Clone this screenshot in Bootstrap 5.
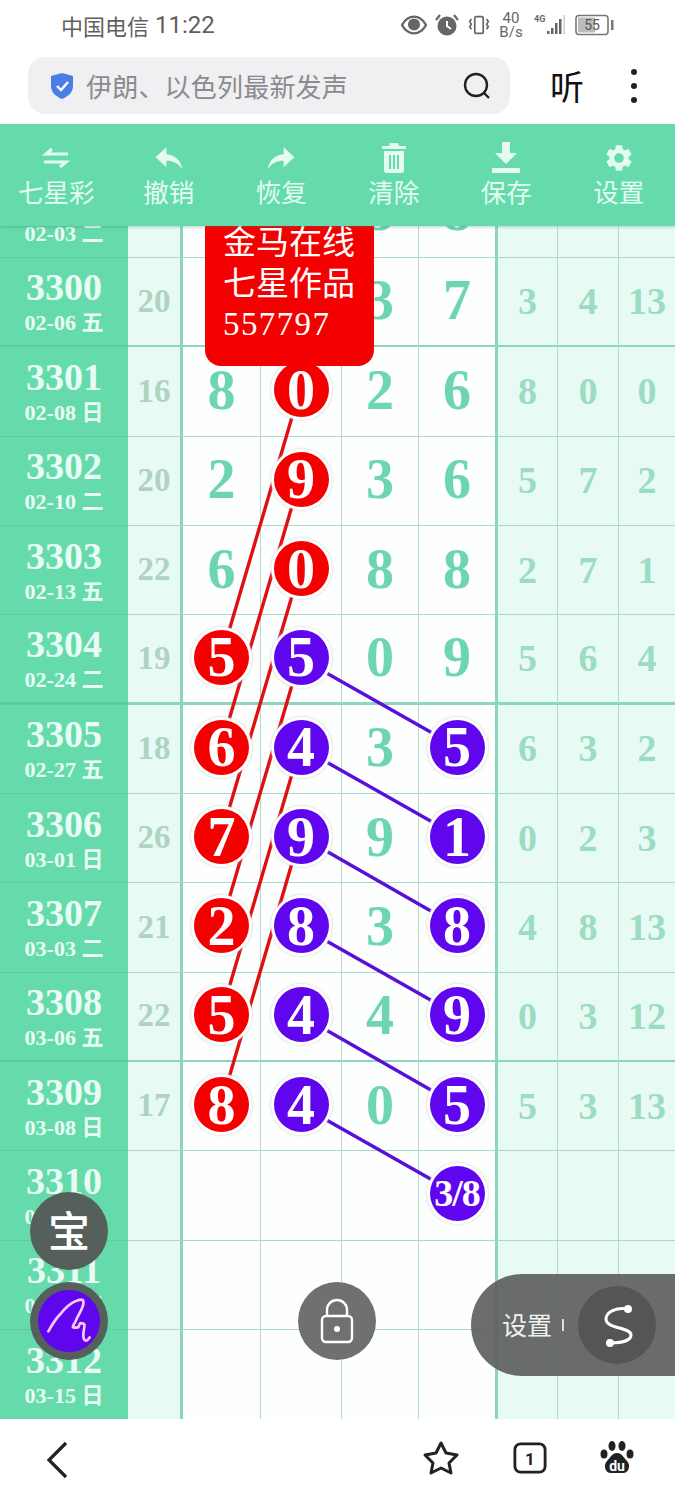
<!DOCTYPE html>
<html lang="zh">
<head>
<meta charset="utf-8">
<title>七星彩</title>
<link href="https://cdn.jsdelivr.net/npm/bootstrap@5.3.0/dist/css/bootstrap.min.css" rel="stylesheet">
<style>
    html, body { height: 1500px; overflow: hidden; background: #fff; }
    body { font-family: "Noto Sans CJK SC", "Noto Sans", sans-serif; position: relative; }
    .status-bar { height: 50px; padding: 0 60px 0 61px; color: #5f5f5f; font-size: 22px; }
    .status-time { font-family: Roboto, sans-serif; font-size: 24px; margin-left: 6px; }
    .status-icons { gap: 8.5px; }
    .speed { font-family: Roboto, sans-serif; font-size: 15px; line-height: 14px; color: #666; width: 26px; }
    .addr-row { height: 74px; padding: 7px 0 10px 28px; }
    .addr-box { width: 482px; height: 57px; background: #f0f0f2; border-radius: 17px; padding: 0 18px 0 22px; }
    .addr-text { color: #8b8b8f; font-size: 26px; letter-spacing: .2px; margin-left: 12px; line-height: 1; }
    .listen { width: 114px; font-size: 34px; color: #111; text-align: center; line-height: 1; }
    .dots { width: 6px; gap: 8px; margin-left: 7px; }
    .dots i { display: block; width: 6px; height: 6px; border-radius: 50%; background: #222; }
    .tool-bar { height: 102px; background: #65dbac; color: #e4fbf1; position: relative; z-index: 5; box-shadow: 0 1px 3px rgba(60,120,100,.35); padding-top: 18px; }
    .tool-bar svg { display: block; margin: 0 auto; height: 32px; }
    .tool-label { font-size: 25.5px; line-height: 36px; margin-top: -1px; }
    .chart-wrap { height: 1193px; position: relative; overflow: hidden; }
    .chart { margin-top: -57.33px; position: relative; }
    .chart-row { display: grid; grid-template-columns: 128px 55px 78px 81px 77px 79px 60px 61px 56px; height: 89.33px; font-family: "Liberation Serif", "Noto Sans CJK SC", serif; font-weight: 700; }
    .chart-row > div { display: flex; align-items: center; justify-content: center; border-bottom: 1.5px solid #abd9c9; border-right: 1.5px solid #b4dace; overflow: visible; }
    .chart-row.heavy > div { border-bottom: 3px solid #8fd5bd; }
    .chart-row > .side { flex-direction: column; background: #65dbac; color: #e9fcf4; border-right: 0; border-bottom-color: #5ccb9f; padding: 3px 0 0; }
    .chart-row.heavy > .side { border-bottom-color: #5ccb9f; }
    .chart-row:last-child > div { border-bottom: 0; }
    .side b { font-size: 38px; line-height: 40px; }
    .side span { font-size: 22px; line-height: 32px; }
    .chart-row > .sum { background: #e7faf5; color: #aed4c1; font-size: 33px; border-right: 3px solid #8fd5bd; }
    .chart-row > .num { background: #fcfffe; color: #6dd6b0; font-size: 56px; padding-bottom: 3px; }
    .chart-row > .num.last { border-right: 3px solid #8fd5bd; }
    .chart-row > .ext { background: #e7fbf4; color: #9bdcc3; font-size: 38px; }
    .chart-row > .ext:last-child { border-right: 0; }
    .ball { width: 55px; height: 55px; flex: none; display: flex; align-items: center; justify-content: center; border-radius: 50%; color: #fff; position: relative; z-index: 2; box-shadow: 0 0 0 3px #fff, 0 0 2px 4px rgba(190,190,190,.4); }
    .ball.red { background: #f40000; }
    .ball.violet { background: #5f06ee; }
    .ball.split { font-size: 38px; letter-spacing: -1px; }
    .link-layer { position: absolute; left: 0; top: 0; z-index: 1; }
    .tag-box { position: absolute; left: 205px; top: -10px; width: 169px; height: 150px; background: #f40000; color: #fff; border-radius: 0 0 16px 16px; z-index: 3; padding: 7px 0 0 18px; font-family: "Liberation Serif", "Noto Sans CJK SC", serif; font-size: 33px; line-height: 41px; }
    .tag-box div:last-child { letter-spacing: 1.4px; line-height: 38px; }
    .float-btn { position: absolute; width: 78px; height: 78px; z-index: 4; color: #fff; }
    .btn-gem { left: 30px; top: 1192px; background: #555f5b; font-size: 42px; font-weight: 500; padding-bottom: 6px; }
    .btn-pen { left: 30px; top: 1282px; background: #555f5b; }
    .pen-inner { width: 62px; height: 62px; background: #5f06ee; }
    .btn-lock { left: 298px; top: 1282px; background: #707070; }
    .set-pill { position: absolute; left: 471px; top: 1274px; width: 204px; height: 102px; background: rgba(92,92,92,.9); border-radius: 51px 0 0 51px; z-index: 4; color: #f2f2f2; font-size: 25px; padding-left: 31px; }
    .pill-tick { width: 2px; height: 12px; background: #ddd; margin: 0 14px 0 10px; }
    .pill-dot { width: 78px; height: 78px; background: #555; }
    .foot-bar { height: 81px; background: #fff; padding-left: 45px; position: relative; }
    .foot-right { position: absolute; left: 422px; top: 21px; gap: 53px; }
</style>
</head>
<body>

<div class="status-bar d-flex align-items-center justify-content-between">
    <div class="d-flex align-items-center"><span>中国电信</span><span class="status-time">11:22</span></div>
    <div class="status-icons d-flex align-items-center">
        <svg width="26" height="20" viewBox="0 0 28 20"><path d="M1 10C5 3 9 1 14 1s9 2 13 9c-4 7-8 9-13 9S5 17 1 10z" fill="none" stroke="#666" stroke-width="2.6"/><circle cx="14" cy="9.500" r="6.500" fill="#666"/></svg>
        <svg width="24" height="24" viewBox="0 0 24 24"><circle cx="12" cy="13" r="9.500" fill="#666"/><path d="M12 8v5l4 3" stroke="#fff" stroke-width="2" fill="none"/><path d="M1 7l4-5M23 7l-4-5" stroke="#666" stroke-width="2.200"/></svg>
        <svg width="22" height="24" viewBox="0 0 26 24" fill="none" stroke="#666" stroke-width="2"><rect x="8" y="2" width="10" height="20" rx="2"/><path d="M4 5l-2 3 2 3-2 3 2 3M22 5l2 3-2 3 2 3-2 3"/></svg>
        <div class="speed text-center">40<br>B/s</div>
        <svg width="34" height="24" viewBox="0 0 32 24"><text x="0" y="9" font-size="9" font-weight="700" fill="#666" font-family="Roboto, sans-serif">4G</text><path d="M13 18h2.500v3H13zM17 15h2.500v6H17zM21 10h2.500v11H21zM25 6h2.500v15H25z" fill="#666"/><path d="M29.500 2h1.500v19h-1.500z" fill="#ccc"/></svg>
        <svg width="40" height="22" viewBox="0 0 40 22"><rect x="1" y="1.500" width="32" height="19" rx="3" fill="none" stroke="#777" stroke-width="1.6"/><rect x="3" y="3.500" width="17" height="15" fill="#bbb"/><text x="17" y="16" font-size="14" text-anchor="middle" fill="#555" font-family="Roboto, sans-serif">55</text><rect x="36" y="6" width="2.500" height="10" fill="#777"/></svg>
    </div>
</div>

<div class="addr-row d-flex align-items-center">
    <div class="addr-box d-flex align-items-center">
        <svg width="24" height="28" viewBox="0 0 24 28"><path d="M12 1l11 3v10c0 7-6 11-11 13C7 25 1 21 1 14V4z" fill="#4a7de8"/><path d="M7 14l4 4 7-8" fill="none" stroke="#fff" stroke-width="2.400"/></svg>
        <span class="addr-text flex-grow-1">伊朗、以色列最新发声</span>
        <svg width="30" height="30" viewBox="0 0 30 30" fill="none" stroke="#222" stroke-width="2.400"><circle cx="14" cy="14" r="11"/><path d="M22 22l5 5"/></svg>
    </div>
    <div class="listen">听</div>
    <div class="dots d-flex flex-column"><i></i><i></i><i></i></div>
</div>

<div class="tool-bar">
    <div class="row g-0 text-center">
        <div class="col-2">
            <svg width="32" height="32" viewBox="0 0 32 32" fill="none" stroke="currentColor" stroke-width="3"><path d="M28 12H6l6-5M4 20h22l-6 5"/></svg>
            <div class="tool-label">七星彩</div>
        </div>
        <div class="col-2">
            <svg width="32" height="32" viewBox="0 0 24 24" fill="currentColor"><path d="M10 9V4L2 11.500 10 19v-5c5 0 9 1.600 12 6.500C21 14 17 10 10 9z"/></svg>
            <div class="tool-label">撤销</div>
        </div>
        <div class="col-2">
            <svg width="32" height="32" viewBox="0 0 24 24" fill="currentColor"><path d="M14 9V4l8 7.500-8 7.500v-5c-5 0-9 1.600-12 6.500C3 14 7 10 14 9z"/></svg>
            <div class="tool-label">恢复</div>
        </div>
        <div class="col-2">
            <svg width="32" height="32" viewBox="0 0 32 32" fill="currentColor"><path d="M12 1h8l1 3h7v3H4V4h7zM6 9h20v19a3 3 0 0 1-3 3H9a3 3 0 0 1-3-3zm5 4v14h2V13zm4 0v14h2V13zm4 0v14h2V13z" fill-rule="evenodd"/></svg>
            <div class="tool-label">清除</div>
        </div>
        <div class="col-2">
            <svg width="32" height="32" viewBox="0 0 32 32" fill="currentColor"><path d="M12 0h8v11h7L16 22 5 11h7zM2 26h28v5H2z"/></svg>
            <div class="tool-label">保存</div>
        </div>
        <div class="col-2">
            <svg width="32" height="32" viewBox="0 0 24 24" fill="currentColor"><path d="M19.140 12.940c.04-.3.06-.61.06-.94 0-.32-.02-.64-.07-.94l2.030-1.580a.49.49 0 0 0 .12-.61l-1.920-3.320a.488.488 0 0 0-.59-.22l-2.390.96c-.5-.38-1.030-.7-1.620-.94l-.36-2.540a.484.484 0 0 0-.48-.41h-3.840c-.24 0-.43.17-.47.41l-.36 2.540c-.59.24-1.130.57-1.620.94l-2.390-.96c-.22-.08-.47 0-.59.22L2.740 8.870c-.12.21-.08.47.12.61l2.030 1.580c-.05.3-.09.63-.09.94s.02.64.07.94l-2.030 1.580a.49.49 0 0 0-.12.61l1.920 3.320c.12.22.37.29.59.22l2.390-.96c.5.38 1.030.7 1.620.94l.36 2.540c.05.24.24.41.48.41h3.840c.24 0 .44-.17.47-.41l.36-2.540c.59-.24 1.130-.56 1.620-.94l2.390.96c.22.08.47 0 .59-.22l1.920-3.320c.12-.22.07-.47-.12-.61l-2.010-1.580zM12 15.600c-1.980 0-3.600-1.620-3.600-3.600s1.620-3.600 3.600-3.600 3.600 1.620 3.600 3.600-1.620 3.600-3.600 3.600z"/></svg>
            <div class="tool-label">设置</div>
        </div>
    </div>
</div>

<div class="chart-wrap">
    <div class="chart" id="chart">
        <svg class="link-layer" width="675" height="1251" viewBox="0 169 675 1251" fill="none" stroke-width="3.4">
            <g stroke="#e01010">
                <path d="M300 390L221 658M300 479L221 747M300 569L221 836M300 658L221 926M300 747L221 1015M300 836L221 1105"/>
            </g>
            <g stroke="#5a0fd8">
                <path d="M300 658L457 747M300 747L457 836M300 836L457 926M300 926L457 1015M300 1015L457 1105M300 1105L457 1194"/>
            </g>
        </svg>
    </div>
    <div class="tag-box">
        <div>金马在线</div>
        <div>七星作品</div>
        <div>557797</div>
    </div>
</div>

<div class="foot-bar d-flex align-items-center">
    <svg width="26" height="38" viewBox="0 0 26 38" fill="none" stroke="#222" stroke-width="3.200"><path d="M21 2L4 19l17 17"/></svg>
    <div class="foot-right d-flex align-items-center">
        <svg width="38" height="36" viewBox="0 0 38 36" fill="none" stroke="#222" stroke-width="3" stroke-linejoin="round"><path d="M19 3l5 10 11 2-8 8 2 10-10-5-10 5 2-10-8-8 11-2z"/></svg>
        <svg width="34" height="34" viewBox="0 0 36 34" fill="none"><rect x="2" y="2" width="32" height="30" rx="6" stroke="#222" stroke-width="3"/><text x="18" y="24" font-size="18" font-weight="700" text-anchor="middle" fill="#222" font-family="Roboto, sans-serif">1</text></svg>
        <svg width="34" height="36" viewBox="0 0 34 36" fill="#222"><ellipse cx="12" cy="6" rx="3.500" ry="5"/><ellipse cx="22" cy="6" rx="3.500" ry="5"/><ellipse cx="4" cy="14" rx="3.500" ry="4.500"/><ellipse cx="30" cy="14" rx="3.500" ry="4.500"/><path d="M17 13c5 0 7 5 10 8 4 4 2 12-4 12H11c-6 0-8-8-4-12 3-3 5-8 10-8z"/><text x="17" y="31" font-size="14" font-weight="700" text-anchor="middle" fill="#fff" font-family="Roboto, sans-serif">du</text></svg>
    </div>
</div>

<div class="float-btn btn-gem rounded-circle d-flex align-items-center justify-content-center">宝</div>
<div class="float-btn btn-pen rounded-circle d-flex align-items-center justify-content-center">
    <div class="pen-inner rounded-circle">
        <svg width="62" height="62" viewBox="0 0 60 60" fill="none" stroke="#f6c8f4" stroke-width="2.600" stroke-linecap="round" stroke-linejoin="round"><path d="M10 40C14 33 17 28 21 24 26 18 31 13 36 11c4-2 8-3 8 1 0 5-4 10-8 19-1 2-3 5-2 5 2 1 4 0 5 0 1-1 1-4 2-4 3 0 4 1 4 2 0 4-2 8-1 12 0 2 2 3 3 3s2-2 3-3"/></svg>
    </div>
</div>
<div class="float-btn btn-lock rounded-circle d-flex align-items-center justify-content-center">
    <svg width="36" height="46" viewBox="0 0 36 46" fill="none" stroke="#fff" stroke-width="2.400"><rect x="3" y="18" width="30" height="26" rx="4"/><path d="M8 18v-6a10 10 0 0 1 20 0v6"/><circle cx="18" cy="31" r="3" fill="#fff" stroke="none"/></svg>
</div>
<div class="set-pill d-flex align-items-center">
    <span>设置</span>
    <i class="pill-tick"></i>
    <div class="pill-dot rounded-circle d-flex align-items-center justify-content-center">
        <svg width="36" height="44" viewBox="0 0 36 44" fill="none" stroke="#fff" stroke-width="3"><path d="M29 6C17 4 7 9 7 16c0 10 25 8 25 16 0 6-11 8-21 8"/><circle cx="29" cy="6" r="4" fill="#fff" stroke="none"/><circle cx="11" cy="40" r="4" fill="#fff" stroke="none"/></svg>
    </div>
</div>

<script src="https://cdn.jsdelivr.net/npm/bootstrap@5.3.0/dist/js/bootstrap.bundle.min.js"></script>
<script>
    // no, date, sum, four draw columns (r = red ball, v = violet ball), three tail columns
    const rows = [
        [3299, '02-03 二', '', '', '', '3', '8', '', '', ''],
        [3300, '02-06 五', 20, '', '', '3', '7', 3, 4, 13],
        [3301, '02-08 日', 16, '8', 'r0', '2', '6', 8, 0, 0],
        [3302, '02-10 二', 20, '2', 'r9', '3', '6', 5, 7, 2],
        [3303, '02-13 五', 22, '6', 'r0', '8', '8', 2, 7, 1],
        [3304, '02-24 二', 19, 'r5', 'v5', '0', '9', 5, 6, 4],
        [3305, '02-27 五', 18, 'r6', 'v4', '3', 'v5', 6, 3, 2],
        [3306, '03-01 日', 26, 'r7', 'v9', '9', 'v1', 0, 2, 3],
        [3307, '03-03 二', 21, 'r2', 'v8', '3', 'v8', 4, 8, 13],
        [3308, '03-06 五', 22, 'r5', 'v4', '4', 'v9', 0, 3, 12],
        [3309, '03-08 日', 17, 'r8', 'v4', '0', 'v5', 5, 3, 13],
        [3310, '03-10 二', '', '', '', '', 'v3/8', '', '', ''],
        [3311, '03-13 五', '', '', '', '', '', '', '', ''],
        [3312, '03-15 日', '', '', '', '', '', '', '', '']
    ];

    function drawCell(v) {
        if (v[0] === 'r') return '<span class="ball red">' + v.slice(1) + '</span>';
        if (v[0] === 'v') {
            const split = v.length > 2 ? ' split' : '';
            return '<span class="ball violet' + split + '">' + v.slice(1) + '</span>';
        }
        return v;
    }

    const chart = document.getElementById('chart');
    rows.forEach(function(r) {
        const row = document.createElement('div');
        row.className = 'chart-row' + ([3300, 3304, 3308].includes(r[0]) ? ' heavy' : '');
        row.innerHTML = '<div class="side"><b>' + r[0] + '</b><span>' + r[1] + '</span></div>' +
            '<div class="sum">' + r[2] + '</div>' +
            '<div class="num">' + drawCell(r[3]) + '</div>' +
            '<div class="num">' + drawCell(r[4]) + '</div>' +
            '<div class="num">' + drawCell(r[5]) + '</div>' +
            '<div class="num last">' + drawCell(r[6]) + '</div>' +
            '<div class="ext">' + r[7] + '</div>' +
            '<div class="ext">' + r[8] + '</div>' +
            '<div class="ext">' + r[9] + '</div>';
        chart.appendChild(row);
    });
</script>
</body>
</html>
